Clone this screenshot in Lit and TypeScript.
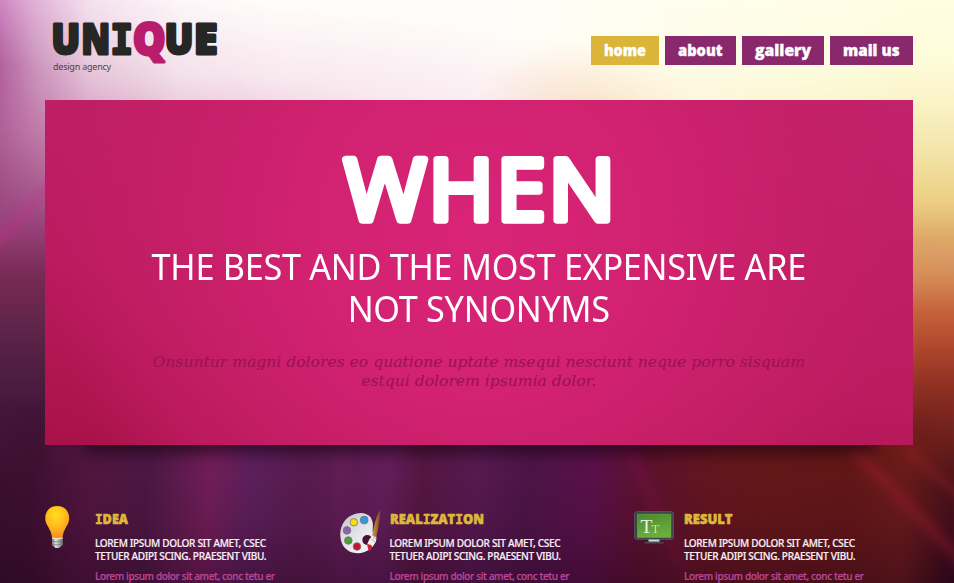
import { LitElement, html, svg, css, nothing } from "lit";
import { customElement, property } from "lit/decorators.js";

interface Feature {
  icon: "bulb" | "palette" | "screen";
  title: string;
  width: number;
}

const NAV = [
  { label: "home", width: 68, ink: 42, active: true },
  { label: "about", width: 70.5, ink: 44.5, active: false },
  { label: "gallery", width: 82, ink: 56, active: false },
  { label: "mail us", width: 82.5, ink: 56.5, active: false },
];

const FEATURES: Feature[] = [
  { icon: "bulb", title: "IDEA", width: 33 },
  { icon: "palette", title: "REALIZATION", width: 94 },
  { icon: "screen", title: "RESULT", width: 48.5 },
];

// The capital I of the display face has slabs, so it is set in the mono bold.
const slabbed = (text: string) =>
  text.split("").map((c) => (c === "I" ? svg`<tspan class="slab">I</tspan>` : svg`<tspan>${c}</tspan>`));

@customElement("unique-logo")
class UniqueLogo extends LitElement {
  static styles = css`
    :host { display: block; }
    svg { display: block; overflow: visible; }
    text {
      font: 800 42px "Open Sans", "Noto Sans", sans-serif;
      fill: #262624; stroke: #262624; stroke-width: 3; stroke-linejoin: round;
    }
    .slab { font-family: "DejaVu Sans Mono", monospace; font-weight: 700; font-size: 41px; }
    .q { fill: #b91c6d; stroke: #b91c6d; font-size: 43.500px; }
    .tag { font: 400 9px/12px "Noto Sans", sans-serif; color: #4a4548; letter-spacing: -.22px; margin-top: -3px; padding-left: .5px; white-space: nowrap; }
  `;
  render() {
    return html`
      <svg width="168" height="43" viewBox="0 0 168 43">
        <text x="-1.5" y="33.200" textLength="28.5" lengthAdjust="spacingAndGlyphs">U</text>
        <text x="28.5" y="33.200" textLength="28.5" lengthAdjust="spacingAndGlyphs">N</text>
        <text class="slab" x="57.500" y="33.200" textLength="22.5" lengthAdjust="spacingAndGlyphs">I</text>
        <text x="111.800" y="33.200" textLength="28.5" lengthAdjust="spacingAndGlyphs">U</text>
        <text x="141" y="33.200" textLength="23.5" lengthAdjust="spacingAndGlyphs">E</text>
        <text class="q" x="80" y="33.800" textLength="32.500" lengthAdjust="spacingAndGlyphs">Q</text>
      </svg>
      <div class="tag">design agency</div>
    `;
  }
}

@customElement("feature-icon")
class FeatureIcon extends LitElement {
  @property() name = "bulb";
  static styles = css`
    :host { display: block; width: 50px; flex: none; }
    svg { display: block; overflow: visible; }
    .letters { font-family: "Liberation Serif", serif; fill: #e5f2dc; }
  `;
  render() {
    if (this.name === "bulb") {
      return html`<svg width="26" height="50" viewBox="0 0 26 50">
        <defs>
          <radialGradient id="g" cx=".45" cy=".28" r=".75">
            <stop offset="0" stop-color="#ffdf1c" /><stop offset=".45" stop-color="#ffc01c" />
            <stop offset="1" stop-color="#f6861f" />
          </radialGradient>
          <linearGradient id="m"><stop offset="0" stop-color="#777" /><stop offset=".35" stop-color="#e3e3e3" /><stop offset="1" stop-color="#696969" /></linearGradient>
        </defs>
        <path d="M12.2 0C5 0 .2 5.200.2 12c0 6.500 4.300 9.300 6 15.500.6 2.300.5 4.500 1.500 5h9c1-.5 1-2.700 1.600-5C20 21.300 24.200 18.500 24.200 12 24.200 5.200 19.400 0 12.200 0Z" fill="url(#g)" />
        <path d="M7 31.500q5.300 1.500 10.800 0v7.500l-2 1.500-1.800 1.500h-3.500l-1.500-1.500-2-1Z" fill="url(#m)" />
        <path d="M7 32q5.300 1.500 10.800 0" stroke="#f7f1dc" fill="none" />
        <path d="M7 35.500q5.300 1 10.800-.5M7 38.500q5.300 1 10.800-.5" stroke="#777" stroke-width=".8" fill="none" />
      </svg>`;
    }
    if (this.name === "palette") {
      return html`<svg width="42" height="50" viewBox="0 0 42 50">
        <defs>
          <linearGradient id="p" x2=".8" y2="1"><stop offset="0" stop-color="#bfc1c9" /><stop offset=".5" stop-color="#e1e2e6" /><stop offset="1" stop-color="#f4f4f5" /></linearGradient>
          <linearGradient id="w"><stop offset="0" stop-color="#d09a4c" /><stop offset="1" stop-color="#7a4a18" /></linearGradient>
        </defs>
        <path d="M21 7C8 7.500.2 17 .3 29.500.6 40 7.500 47.300 17.500 47.200c5 0 9.500-1.700 13-4.700C34 40 35.500 36 34 31c-1-3.500-1.500-5-1.300-7.500C33.200 19 33 15.500 30.800 11.500 28.300 8.600 25 7 21 7Z" fill="url(#p)" />
        <circle cx="27.300" cy="34" r="5" fill="#4a1035" />
        <g stroke="#77717a" stroke-width=".8">
          <circle cx="13.800" cy="16.300" r="3.700" fill="#fbe204" />
          <circle cx="24.200" cy="14" r="3.900" fill="#2f9bdb" />
          <circle cx="7" cy="24.400" r="3.800" fill="#8b62ae" />
          <circle cx="8.300" cy="34.500" r="3.800" fill="#4b9d3c" />
          <circle cx="17" cy="40.500" r="3.800" fill="#c4162a" />
        </g>
        <path d="M40 3.500c.8 5-1.200 17-3.700 27.500l-4-1C33.500 20 37 9 40 3.500Z" fill="url(#w)" />
        <path d="m32.300 30 4.200 1-.5 4.500-3.500 5.500-5.500-2.500 2.500-5.500Z" fill="#f0eef0" />
        <path d="M31.500 33.500q2.500.2 3.500 3M33 31.500l3 1.200" stroke="#999" stroke-width=".7" fill="none" />
        <path d="M27 38.500c2-.8 4.500.2 5.500 2.500L29 46Z" fill="#d41f2c" />
      </svg>`;
    }
    return html`<svg width="42" height="50" viewBox="0 0 42 50">
      <defs><linearGradient id="s" x2=".3" y2="1"><stop offset="0" stop-color="#4a8731" /><stop offset=".5" stop-color="#5c9b37" /><stop offset="1" stop-color="#6cae3d" /></linearGradient></defs>
      <rect x=".8" y="5.800" width="38.400" height="27.400" rx="1.800" fill="#353b42" stroke="#59616a" />
      <rect x="3.200" y="8" width="33.800" height="23.500" fill="url(#s)" stroke="#72b048" stroke-width=".5" />
      <path d="M14.500 33.500h11v2.200h-11Z" fill="#d5d7dc" />
      <path d="M10.500 36.700h19" stroke="#454b53" stroke-width="1.700" />
      <text class="letters" x="6.500" y="26.500" font-size="19" textLength="12" lengthAdjust="spacingAndGlyphs">T</text>
      <text class="letters" x="17.500" y="26.500" font-size="13" opacity=".75">T</text>
    </svg>`;
  }
}

@customElement("app-root")
class AppRoot extends LitElement {
  static styles = css`
    :host {
      display: block; position: relative; box-sizing: border-box;
      width: 954px; height: 583px; overflow: hidden;
      font-family: "Noto Sans", "Open Sans", sans-serif;
    }
    .backdrop, .layer { position: absolute; inset: 0; }
    .backdrop { overflow: hidden; background: #fffdfb; }
    .left {
      background: linear-gradient(187deg, #e6b6e0 0, #dba0d4 70px, #cd84bf 120px, #b3649f 175px, #9c4680 230px, #7c2b58 285px, #592347 350px, #43173a 410px, #3c1030 480px, #340b23 620px);
      mask-image: linear-gradient(90deg, #000 0, rgba(0,0,0,.65) 35px, rgba(0,0,0,.25) 90px, rgba(0,0,0,.06) 180px, transparent 280px);
    }
    .blush { background: radial-gradient(ellipse 520px 150px at 200px 150px, rgba(218,140,182,.6), rgba(225,160,195,.22) 50%, transparent), radial-gradient(ellipse 120px 80px at 590px 120px, rgba(250,190,150,.5), transparent); }
    .lowleft {
      background: linear-gradient(180deg, #d38fc4 90px, #c277ae 140px, #a9568f 190px, #933c74 235px, #782a55 275px, #592347 340px, #43173a 410px, #3c1030 480px);
      mask-image: linear-gradient(180deg, transparent 60px, rgba(0,0,0,.55) 130px, #000 230px), linear-gradient(90deg, #000 45px, transparent 180px);
      mask-composite: intersect;
    }
    .right {
      background: linear-gradient(180deg, #fffde2 0, #fefcda 60px, #f9f1c2 110px, #f3e3a6 155px, #ecd083 200px, #dea864 240px, #d58d58 275px, #c5623b 312px, #ad452c 350px, #8c2e21 390px, #72221e 430px, #4c1317 485px, #480e1b 535px, #350918 583px);
      mask-image: linear-gradient(90deg, transparent 480px, rgba(0,0,0,.6) 700px, #000 920px);
    }
    .bottom {
      background: linear-gradient(94deg, #3b1030 0, #3d1031 60px, #541640 125px, #4d1845 180px, #741f59 243px, #5e205e 285px, #5b1c50 335px, #651f5c 420px, #571743 455px, #591a53 510px, #4e1548 560px, #5c114b 625px, #5e112f 675px, #67161f 740px, #681818 800px, #651716 880px, #6f1d19 954px);
      mask-image: linear-gradient(180deg, transparent 400px, #000 445px), linear-gradient(90deg, transparent 0, #000 50px, #000 900px, transparent 950px);
      mask-composite: intersect;
    }
    .dim { background: linear-gradient(180deg, transparent 450px, rgba(34,4,30,.15) 520px, rgba(30,3,26,.4) 583px); }
    .streak { position: absolute; filter: blur(5px); transform-origin: 0 50%; }
    .s1 { left: -10px; top: 245px; width: 90px; height: 8px; background: rgba(197,46,137,.45); transform: rotate(-47deg); }
    .s2 { left: 852px; top: 442px; width: 170px; height: 12px; background: rgba(158,30,44,.5); transform: rotate(46deg); }
    .s3 { left: 905px; top: 445px; width: 90px; height: 8px; background: rgba(155,32,40,.45); transform: rotate(40deg); }
    .s4 { left: 630px; top: 444px; width: 130px; height: 14px; background: rgba(135,15,80,.3); transform: rotate(66deg); }
    .s5 { left: 905px; top: 232px; width: 70px; height: 5px; background: rgba(226,150,130,.5); transform: rotate(27deg); }
    .s6 { left: 340px; top: 445px; width: 140px; height: 5px; background: rgba(125,35,105,.4); transform: rotate(90deg); }

    .page { position: relative; width: 867.5px; padding-left: 45px; }
    header { display: flex; justify-content: space-between; height: 100px; }
    unique-logo { margin: 20.500px 0 0 7.500px; }
    nav { display: flex; gap: 6.200px; margin-top: 36.400px; }
    .tab { display: block; height: 29px; background: #89286d; text-decoration: none; }
    .tab.active { background: #dab53a; }
    .tab svg, h1 svg, h3 svg { display: block; overflow: visible; }
    .tab text { font: 800 16.500px "Open Sans", sans-serif; fill: #fff; stroke: #fff; stroke-width: .4; stroke-linejoin: round; }

    .panel {
      position: relative; height: 344.500px; box-sizing: border-box; padding-top: 50px; text-align: center;
      background: radial-gradient(ellipse 430px 430px at 50% 40%, #d92477 0, #d32272 35%, rgba(198,31,103,.6) 80%, transparent 100%), linear-gradient(190deg, #c1226a 0, #bc1b60 60%, #a81248 100%);
    }
    .shadow { position: absolute; left: 40px; right: 40px; bottom: 4px; height: 12px; border-radius: 20px; box-shadow: 0 9px 16px 3px rgba(20,0,15,.65); z-index: -1; }
    .stack { position: relative; z-index: 0; }
    h1, h2, h3, p { margin: 0; font-weight: 400; }
    h1 { display: flex; justify-content: center; height: 96px; }
    h1 text { font: 400 85px "Open Sans", sans-serif; letter-spacing: 3px; fill: #fff; stroke: #fff; stroke-width: 7.500; stroke-linejoin: round; }
    h2 { font: 400 36px/42px "Noto Sans", sans-serif; color: #fff; letter-spacing: -.3px; white-space: nowrap; transform: scaleX(.95); }
    .quote { font: italic 400 15.600px/19.500px "DejaVu Serif", serif; color: #9a1155; margin-top: 22.500px; white-space: nowrap; }

    .features { display: flex; gap: 0; padding-top: 61.500px; }
    .feature { display: flex; width: 294.500px; flex: none; }
    .copy { white-space: nowrap; }
    h3 { height: 30.500px; }
    h3 text { font: 800 14px "Open Sans", sans-serif; fill: #dcb93b; stroke: #dcb93b; stroke-width: .6; stroke-linejoin: round; }
    .slab { font-family: "DejaVu Sans Mono", monospace; font-weight: 700; }
    .lead, .more { -webkit-text-stroke: .2px; }
    .lead { font: 500 10px/13px "Noto Sans", sans-serif; color: #f8eef5; letter-spacing: -.31px; }
    .more { font: 500 10px/13px "Noto Sans", sans-serif; color: #bd459b; letter-spacing: -.37px; margin-top: 7.500px; }
  `;

  render() {
    return html`
      <div class="backdrop">
        <div class="layer blush"></div>
        <div class="layer right"></div>
        <div class="layer left"></div>
        <div class="layer lowleft"></div>
        <div class="layer bottom"></div>
        ${[1, 2, 3, 4, 5, 6].map((n) => html`<div class="streak s${n}"></div>`)}
        <div class="layer dim"></div>
      </div>
      <div class="page">
        <header>
          <unique-logo></unique-logo>
          <nav>
            ${NAV.map(
              (n) => html`<a class="tab ${n.active ? "active" : ""}" aria-current=${n.active ? "page" : nothing}>
                <svg width=${n.width} height="29">
                  <text x="13" y="19.500" textLength=${n.ink} lengthAdjust="spacingAndGlyphs">${n.label}</text>
                </svg>
              </a>`
            )}
          </nav>
        </header>
        <div class="stack">
          <div class="shadow"></div>
          <section class="panel">
            <h1><svg width="278" height="96"><text x="4.500" y="69.800" textLength="273.500" lengthAdjust="spacingAndGlyphs">WHEN</text></svg></h1>
            <h2>THE BEST AND THE MOST EXPENSIVE ARE<br />NOT SYNONYMS</h2>
            <p class="quote">Onsuntur magni dolores eo quatione uptate msequi nesciunt neque porro sisquam<br />estqui dolorem ipsumia dolor.</p>
          </section>
        </div>
        <section class="features">
          ${FEATURES.map(
            (f) => html`<article class="feature">
              <feature-icon .name=${f.icon}></feature-icon>
              <div class="copy">
                <h3><svg width=${f.width} height="30"><text y="18.300" textLength=${f.width} lengthAdjust="spacingAndGlyphs">${slabbed(f.title)}</text></svg></h3>
                <p class="lead">LOREM IPSUM DOLOR SIT AMET, CSEC<br />TETUER ADIPI SCING. PRAESENT VIBU.</p>
                <p class="more">Lorem ipsum dolor sit amet, conc tetu er</p>
              </div>
            </article>`
          )}
        </section>
      </div>
    `;
  }
}
